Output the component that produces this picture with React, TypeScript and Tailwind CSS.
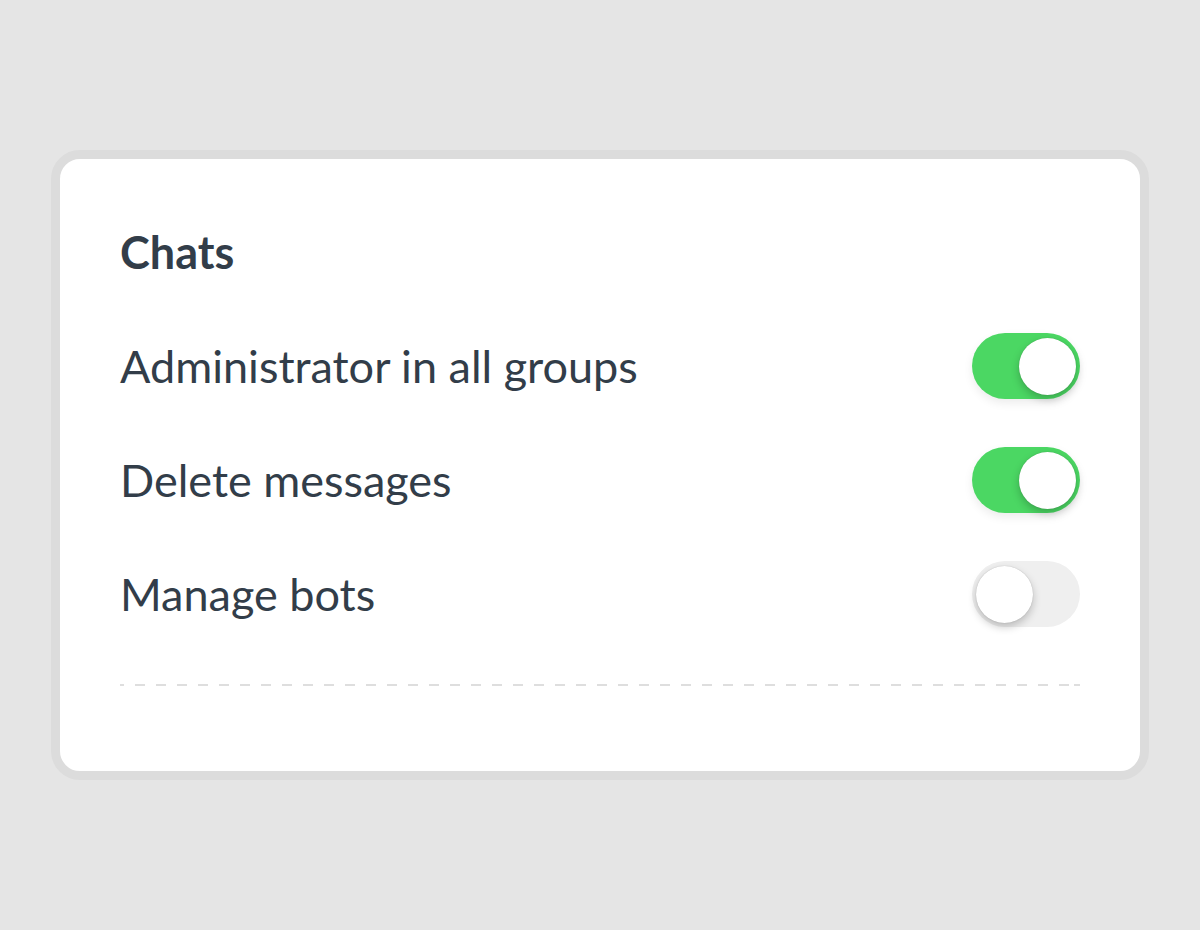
const rows = [
  { label: "Administrator in all groups", on: true },
  { label: "Delete messages", on: true },
  { label: "Manage bots", on: false },
];

function Toggle({ on }: { on: boolean }) {
  return (
    <div
      className={`flex h-[66px] w-[108px] shrink-0 items-center rounded-full px-[4px] ${
        on ? "justify-end bg-[#4bd763] shadow-[0_4px_10px_rgba(0,0,0,0.08)]" : "justify-start bg-[#efefef]"
      }`}
    >
      <div className="h-[57px] w-[57px] rounded-full bg-white shadow-[0_4px_9px_rgba(0,0,0,0.22),0_0_1px_rgba(0,0,0,0.25)]" />
    </div>
  );
}

export default function App() {
  return (
    <div className="min-h-[930px] bg-[#e5e5e5] px-[51px] pt-[150px] font-['Lato',sans-serif] text-[#323d49]">
      <div className="rounded-[29px] border-[9px] border-[#dcdcdc] bg-white px-[60px] pb-[85px] pt-[66px]">
        <h2 className="text-[45px] font-bold leading-[1.2]">Chats</h2>
        <div className="mt-[54px] flex flex-col gap-[48px]">
          {rows.map((row) => (
            <div key={row.label} className="flex h-[66px] items-center justify-between">
              <span className="text-[45px] leading-[1.2]">{row.label}</span>
              <Toggle on={row.on} />
            </div>
          ))}
        </div>
        <div className="mt-[57px] h-[2px] bg-[repeating-linear-gradient(90deg,#dedede_0_10px,transparent_10px_21px)] bg-[position:-6px_0]" />
      </div>
    </div>
  );
}
